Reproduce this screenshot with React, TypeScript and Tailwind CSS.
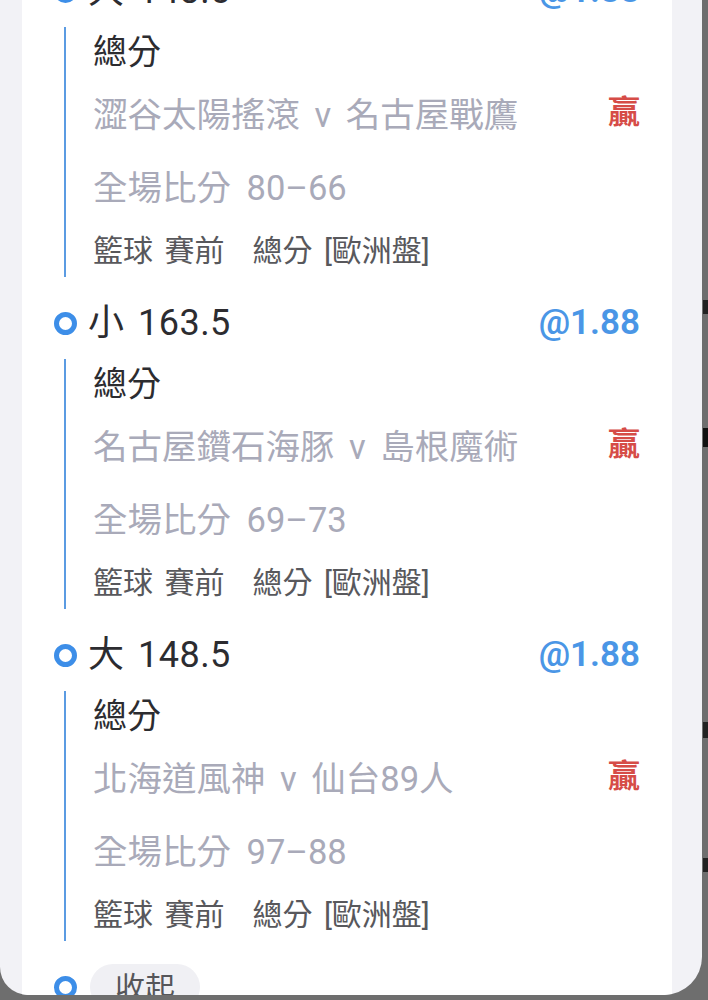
import React from "react";

const bets = [
  { pick: "大 148.5", odds: "@1.88", teams: "澀谷太陽搖滾 v 名古屋戰鷹", score: "80–66" },
  { pick: "小 163.5", odds: "@1.88", teams: "名古屋鑽石海豚 v 島根魔術", score: "69–73" },
  { pick: "大 148.5", odds: "@1.88", teams: "北海道風神 v 仙台89人", score: "97–88" },
];

const font = { fontFamily: '"Roboto", "Noto Sans CJK TC", sans-serif' };

function Marker() {
  return <div className="h-[23px] w-[23px] shrink-0 rounded-full border-[5px] border-[#3d8ee8] bg-white" />;
}

export default function App() {
  return (
    <div className="flex h-[1000px] w-[708px] overflow-hidden bg-[#6e6e6e]" style={font}>
      <div className="relative h-[995px] w-[702px] shrink-0 overflow-hidden rounded-bl-[28px] rounded-br-[38px] bg-[#f2f2f6]">
        <div className="ml-[22px] mt-[-2px] h-[1100px] w-[650px] rounded-t-[26px] bg-white pl-[32px] pr-[32px]">
          <div className="mt-[-40px]">
            {bets.map((b, i) => (
              <div key={i}>
                {/* 標題列 */}
                <div className="flex h-[62px] items-center">
                  <Marker />
                  <span className="ml-[11px] text-[36px] tracking-[0.5px] text-[#2c2c30] [word-spacing:4px]">{b.pick}</span>
                  <span className="ml-auto text-[35px] font-semibold text-[#4a96e6]">{b.odds}</span>
                </div>
                <div className="pb-[15px] pt-[5px]">
                  <div className="ml-[10px] border-l-2 border-[#5b9be2] pl-[27px]">
                    <div className="flex h-[50px] items-center text-[34px] text-[#2c2c30]">總分</div>
                    <div className="flex h-[78px] items-center text-[34.5px] text-[#a9aab9] [word-spacing:6px]">
                      <span>{b.teams}</span>
                      <span className="ml-auto mb-[8px] text-[32px] font-bold text-[#d64c47]">贏</span>
                    </div>
                    <div className="flex h-[68px] items-center text-[34.5px] text-[#a9aab9] [word-spacing:7px]">
                      全場比分 {b.score}
                    </div>
                    <div className="flex h-[54px] items-center text-[30px] text-[#58585c] [word-spacing:4px]">
                      <span>籃球 賽前</span>
                      <span className="ml-[28px]">總分 [歐洲盤]</span>
                    </div>
                  </div>
                </div>
              </div>
            ))}
            <div className="flex h-[62px] items-center">
              <Marker />
              <div className="ml-[13px] flex h-[46px] items-center rounded-full bg-[#f0f0f4] px-[25px] text-[30px] text-[#56565a]">
                收起
              </div>
            </div>
          </div>
        </div>
      </div>
      <div className="relative h-full flex-1">
        <div className="absolute left-[1px] top-[300px] h-[14px] w-[5px] bg-[#222]" />
        <div className="absolute left-[1px] top-[428px] h-[19px] w-[5px] bg-[#111]" />
        <div className="absolute left-[1px] top-[722px] h-[16px] w-[5px] bg-[#222]" />
        <div className="absolute left-[1px] top-[858px] h-[14px] w-[5px] bg-[#222]" />
      </div>
    </div>
  );
}
